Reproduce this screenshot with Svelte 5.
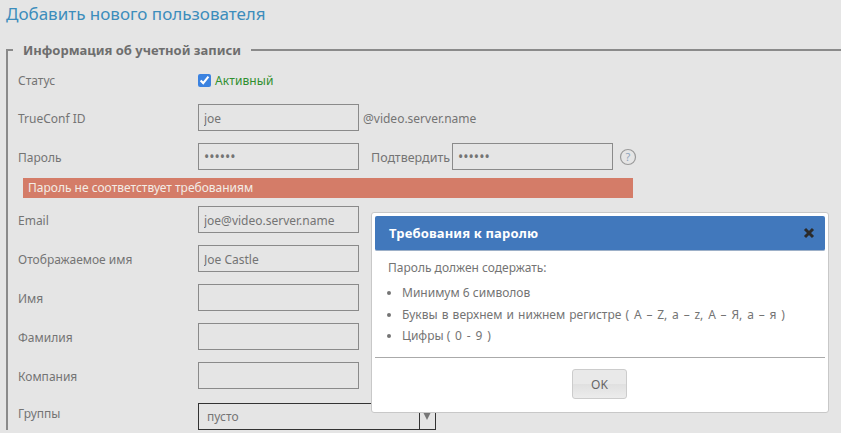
<script>
  const requirements = [
    { text: "Минимум 6 символов" },
    {
      text: "Буквы в верхнем и нижнем регистре",
      range: "( A – Z, a – z, А – Я, а – я )",
    },
    { text: "Цифры", range: "( 0 - 9 )" },
  ];
</script>

<div class="page">
  <h1>Добавить нового пользователя</h1>

  <fieldset>
    <legend>Информация об учетной записи</legend>

    <div class="row status">
      <span class="label">Статус</span>
      <input type="checkbox" checked />
      <span class="active">Активный</span>
    </div>

    <div class="row">
      <span class="label">TrueConf ID</span>
      <input type="text" value="joe" />
      <span class="domain">@video.server.name</span>
    </div>

    <div class="row tight">
      <span class="label">Пароль</span>
      <input type="password" value="123456" />
      <span class="confirm">Подтвердить</span>
      <input type="password" value="123456" />
      <svg class="help" width="18" height="18" viewBox="0 0 18 18">
        <circle cx="9" cy="9" r="7.5" fill="none" stroke="#9a9a9a" stroke-width="1.2" />
        <text x="9" y="13" text-anchor="middle">?</text>
      </svg>
    </div>

    <div class="error">Пароль не соответствует требованиям</div>

    <div class="row">
      <span class="label">Email</span>
      <input type="text" value="joe@video.server.name" />
    </div>
    <div class="row">
      <span class="label">Отображаемое имя</span>
      <input type="text" value="Joe Castle" />
    </div>
    <div class="row">
      <span class="label">Имя</span>
      <input type="text" />
    </div>
    <div class="row">
      <span class="label">Фамилия</span>
      <input type="text" />
    </div>
    <div class="row">
      <span class="label">Компания</span>
      <input type="text" />
    </div>
    <div class="row groups">
      <span class="label">Группы</span>
      <div class="select">
        <span class="value">пусто</span>
        <span class="arrow"></span>
      </div>
    </div>
  </fieldset>

  <div class="modal">
    <div class="modal-head">
      <span>Требования к паролю</span>
      <svg width="12" height="12" viewBox="0 0 12 12">
        <path d="M2 2l8 8M10 2l-8 8" stroke="#2b2b2b" stroke-width="3" />
      </svg>
    </div>
    <div class="modal-body">
      <p>Пароль должен содержать:</p>
      <ul>
        {#each requirements as item}
          <li>
            {item.text}
            {#if item.range}
              <span class="range">{item.range}</span>
            {/if}
          </li>
        {/each}
      </ul>
    </div>
    <div class="modal-foot">
      <button>OK</button>
    </div>
  </div>
</div>

<style>
  :global(body) {
    margin: 0;
    background: #e5e5e5;
  }

  .page {
    position: relative;
    width: 841px;
    height: 433px;
    overflow: hidden;
    font-family: "Noto Sans", sans-serif;
    font-size: 12px;
    color: #747474;
  }

  h1 {
    margin: 0;
    padding: 1px 0 0 6px;
    height: 29px;
    font-size: 17px;
    font-weight: 400;
    line-height: 26px;
    color: #3c8dbc;
  }

  fieldset {
    margin: 11px 0 0 6px;
    padding: 0 0 0 10px;
    border: 0 solid #8a8a8a;
    border-width: 2px 0 0 2px;
  }

  legend {
    margin-left: -5px;
    padding: 0 10px;
    font-size: 13px;
    font-weight: 700;
    line-height: 18px;
    color: #6e6e6e;
  }

  .row {
    display: flex;
    align-items: center;
    height: 27px;
    margin-bottom: 12px;
  }

  .row.status {
    margin-top: 8px;
    margin-bottom: 10px;
  }

  .row.tight {
    margin-bottom: 8px;
  }

  .row.groups {
    margin-top: 14px;
    margin-bottom: 0;
  }

  .label,
  .domain,
  .confirm {
    padding-top: 2px;
  }

  .label {
    flex: none;
    width: 180px;
  }

  .status .label {
    padding-top: 0;
  }

  .groups .label {
    padding: 0 0 6px;
  }

  input[type="text"],
  input[type="password"] {
    box-sizing: border-box;
    flex: none;
    width: 161px;
    height: 27px;
    padding: 2px 5px 0;
    border: 1px solid #8a8a8a;
    background: #e5e5e5;
    font: inherit;
    color: inherit;
    outline: none;
  }

  input[type="password"] {
    padding-top: 0;
    font-size: 14px;
  }

  input[type="checkbox"] {
    width: 13px;
    height: 13px;
    margin: 0 4px 0 0;
    accent-color: #3b82e0;
  }

  .active {
    color: #2f8f2f;
    letter-spacing: 0.1px;
  }

  .domain {
    margin-left: 4px;
  }

  .confirm {
    margin: 0 2px 0 12px;
    font-size: 12.5px;
  }

  .help {
    margin-left: 6px;
  }

  .help text {
    font-size: 11px;
    fill: #8fa3bb;
  }

  .error {
    width: 605px;
    height: 20px;
    margin: 0 0 8px 5px;
    padding-left: 5px;
    background: #d47c68;
    color: #f3ece6;
    line-height: 20px;
  }

  .select {
    box-sizing: border-box;
    display: flex;
    align-items: stretch;
    width: 238px;
    height: 27px;
    border: 1px solid #333;
  }

  .value {
    flex: 1;
    padding-left: 8px;
    line-height: 25px;
  }

  .arrow {
    position: relative;
    width: 15px;
    border-left: 1px solid #333;
  }

  .arrow::after {
    content: "";
    position: absolute;
    top: 8px;
    left: 3px;
    border: 4px solid transparent;
    border-top: 8px solid #777;
    border-bottom: 0;
  }

  .modal {
    position: absolute;
    left: 371px;
    top: 212px;
    box-sizing: border-box;
    width: 458px;
    height: 201px;
    padding: 3px;
    border: 1px solid #c8c8c8;
    border-radius: 3px;
    background: #fff;
  }

  .modal-head {
    display: flex;
    align-items: center;
    justify-content: space-between;
    height: 35px;
    padding: 0 10px 0 14px;
    border-radius: 2px;
    background: #4178bc;
    border-bottom: 1px solid #9db0c8;
    box-sizing: border-box;
    font-size: 13px;
    font-weight: 700;
    letter-spacing: 0.15px;
    color: #fff;
  }

  .modal-body {
    height: 106px;
    padding: 0 13px;
    border-bottom: 1px solid #aaa;
  }

  .modal-body p {
    margin: 0;
    padding-top: 8px;
    line-height: 18px;
  }

  ul {
    margin: 5px 0 0;
    padding: 0 0 0 14px;
  }

  li {
    height: 21.5px;
    line-height: 21px;
  }

  li:nth-child(2) {
    word-spacing: 1px;
  }

  .range {
    word-spacing: 1.7px;
  }

  .modal-foot {
    display: flex;
    justify-content: center;
    padding: 11px 1px 0 0;
  }

  button {
    width: 55px;
    height: 30px;
    border: 1px solid #ccc;
    border-radius: 3px;
    background: linear-gradient(#e9e9e9 50%, #e0e0e0 50%, #ececec);
    font: inherit;
    color: #666;
  }
</style>
